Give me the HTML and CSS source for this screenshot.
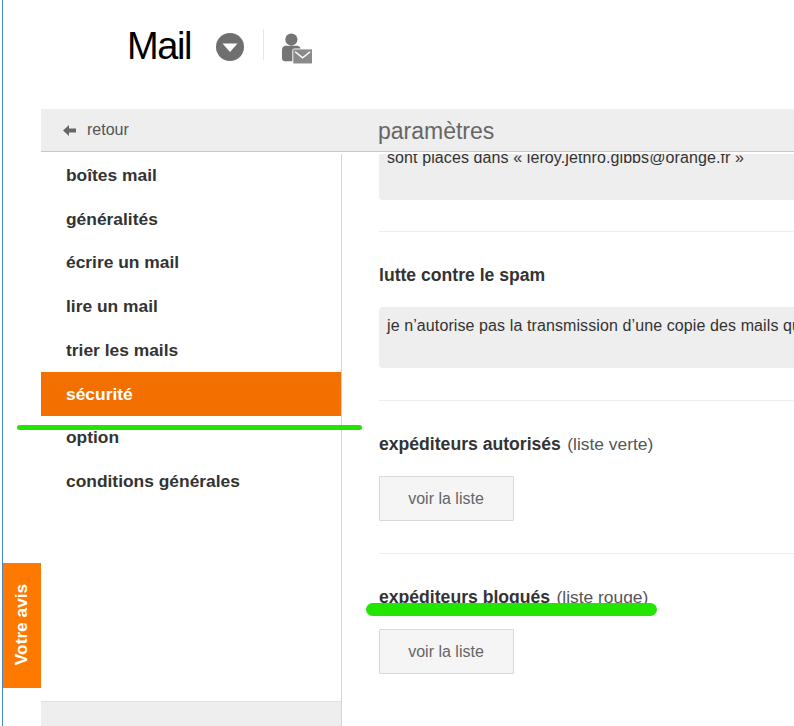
FILE: index.html
```html
<!DOCTYPE html>
<html lang="fr">
<head>
<meta charset="utf-8">
<title>Mail - paramètres</title>
<link rel="stylesheet" href="styles.css">
</head>
<body>
<div class="page">
  <header class="top">
    <h1 class="brand">Mail</h1>
    <svg class="caret" width="28" height="28" viewBox="0 0 28 28"><circle cx="14" cy="14" r="14" fill="#6f6f6f"/><path d="M6.500 10.500h15L14 19z" fill="#fff"/></svg>
    <span class="sep"></span>
    <svg class="user" width="30" height="32" viewBox="0 0 32 34"><circle cx="10" cy="8" r="6.500" fill="#757575"/><path d="M0 19c0-3 2-4.500 4-4.500h12c2 0 3 1 4 3h-7c-1 0-2 1-2 2V31H3c-2 0-3-1-3-3z" fill="#757575"/><rect x="12" y="18.500" width="20" height="15" fill="#8a8a8a"/><path d="M14 21l8 6.500 8-6.500" fill="none" stroke="#fff" stroke-width="1.600"/></svg>
  </header>
  <div class="bar">
    <div class="back">
      <svg width="13" height="11" viewBox="0 0 13 11"><path d="M0 5.500L6 0v3.500h7v4H6V11z" fill="#666"/></svg>
      <span>retour</span>
    </div>
    <h2 class="title">paramètres</h2>
  </div>
  <div class="columns">
    <nav class="side">
      <ul class="menu">
        <li>boîtes mail</li>
        <li>généralités</li>
        <li>écrire un mail</li>
        <li>lire un mail</li>
        <li>trier les mails</li>
        <li class="active">sécurité</li>
        <li>option</li>
        <li>conditions générales</li>
      </ul>
      <div class="side-foot"></div>
    </nav>
    <main class="content">
      <div class="note note-first">sont placés dans « leroy.jethro.gibbs@orange.fr »</div>
      <hr class="rule rule-a">
      <h3 class="head head-spam">lutte contre le spam</h3>
      <div class="note note-spam">je n’autorise pas la transmission d’une copie des mails qui me sont adressés à des fins de lutte contre le spam</div>
      <hr class="rule rule-b">
      <h3 class="head head-ok">expéditeurs autorisés <span class="sub">(liste verte)</span></h3>
      <button class="btn" type="button">voir la liste</button>
      <hr class="rule rule-c">
      <h3 class="head head-ko">expéditeurs bloqués <span class="sub">(liste rouge)</span></h3>
      <button class="btn" type="button">voir la liste</button>
    </main>
  </div>
  <a class="feedback"><span>Votre avis</span></a>
  <span class="mark mark-one"></span>
  <span class="mark mark-two"></span>
</div>
</body>
</html>
```
FILE: styles.css
```css
* { box-sizing: border-box; }
html, body { margin: 0; padding: 0; height: 100%; overflow: hidden; background: #fff; }
body { font-family: "Liberation Sans", Arial, sans-serif; color: #333; }
.page { position: relative; width: 794px; height: 726px; overflow: hidden; padding-left: 41px; }
.page::before { content: ""; position: absolute; left: 2px; top: 0; bottom: 0; width: 1px; background: #4a8ac4; }

.top { height: 109px; display: flex; align-items: flex-start; padding: 30px 0 0 86px; }
.brand { margin: -4px 0 0; font-size: 38px; line-height: 40px; font-weight: 400; color: #000; letter-spacing: -1.4px; width: 89px; }
.caret { margin-top: 3px; }
.sep { width: 1px; height: 31px; background: #e6e6e6; margin: -1px 18px 0 19px; }
.user { margin-top: 2px; }

.bar { height: 43px; background: #eee; border-bottom: 1px solid #c8c8c8; display: flex; align-items: center; }
.back { width: 337px; padding-left: 22px; display: flex; align-items: center; gap: 11px; font-size: 16px; color: #555; }
.title { margin: 0; font-size: 23px; font-weight: 400; color: #666; line-height: 43px; position: relative; top: 1px; }

.columns { display: flex; height: 574px; }
.side { width: 301px; border-right: 1px solid #d4d4d4; margin-top: 2px; height: 572px; display: flex; flex-direction: column; justify-content: space-between; flex: none; }
.menu { list-style: none; margin: -.5px 0 0; padding: 0; }
.menu li { height: 43.75px; line-height: 43px; padding: .25px 0 0 25px; font-size: 17.4px; font-weight: 700; color: #333; }
.menu li.active { background: #f36f00; color: #fff; }
.side-foot { height: 25px; background: #eee; border-top: 1px solid #e0e0e0; }

.content { flex: 1; margin-top: 2px; padding-left: 37px; overflow: hidden; min-width: 0; }
.note { background: #eee; border-radius: 4px; font-size: 16px; letter-spacing: .1px; line-height: 20px; color: #333; padding: 9px 8px; white-space: nowrap; overflow: hidden; width: 600px; }
.note-first { margin-top: -23px; height: 69px; padding-top: 17px; }
.note-spam { height: 61px; }
.rule { border: 0; height: 1px; background: #ececec; margin: 0; width: 600px; }
.rule-a { margin-top: 31px; }
.rule-b { margin-top: 32px; }
.rule-c { margin-top: 32px; }
.head { margin: 32px 0 21px; font-size: 17.6px; line-height: 22px; font-weight: 700; color: #333; }
.sub { font-weight: 400; font-size: 17.4px; color: #555; margin-left: 1.5px; }
.btn { display: block; width: 135px; height: 45px; background: #f5f5f5; border: 1px solid #d8d8d8; border-radius: 1px; font: 16px "Liberation Sans", Arial, sans-serif; color: #666; padding: 0 1px 0 0; }

.feedback { position: absolute; left: 3px; top: 563px; width: 38px; height: 125px; padding-bottom: 3px; background: #ff7900; color: #fff; font-weight: 700; font-size: 17.3px; display: flex; align-items: center; justify-content: center; }
.feedback span { transform: rotate(-90deg); white-space: nowrap; }
.mark { position: absolute; background: #22e600; border-radius: 7px; }
.mark-one { left: 17px; top: 425px; width: 345px; height: 5px; }
.mark-two { left: 366px; top: 603px; width: 291px; height: 13px; }
```
